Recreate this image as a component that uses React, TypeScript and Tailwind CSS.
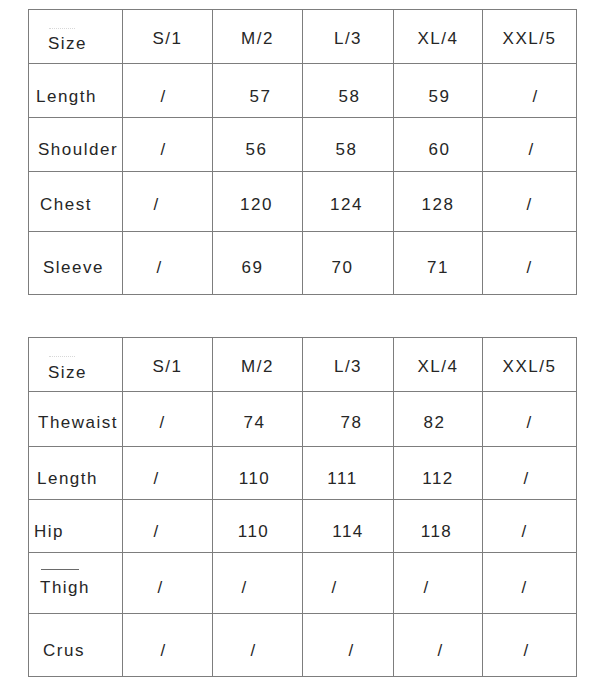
import React from "react";

type Row = {
  label: string;
  labelPad: string;
  height: string;
  pad: string;
  labelPadTop?: string;
  mark?: "dots" | "line";
  cells: [string, string][];
};

const header = ["S/1", "M/2", "L/3", "XL/4", "XXL/5"];

const topTable: Row[] = [
  {
    label: "Size",
    labelPad: "pl-[19px]",
    labelPadTop: "pt-[24px]",
    height: "h-[54px]",
    pad: "pt-[19px]",
    mark: "dots",
    cells: header.map((h) => [h, ""]) as [string, string][],
  },
  {
    label: "Length",
    labelPad: "pl-[7px]",
    height: "h-[54px]",
    pad: "pt-[23px]",
    cells: [
      ["/", "pr-[8px]"],
      ["57", "pl-[6px]"],
      ["58", "pl-[3px]"],
      ["59", "pl-[3px]"],
      ["/", "pl-[12px]"],
    ],
  },
  {
    label: "Shoulder",
    labelPad: "pl-[9px]",
    height: "h-[54px]",
    pad: "pt-[22px]",
    cells: [
      ["/", "pr-[8px]"],
      ["56", "pr-[2px]"],
      ["58", "pr-[3px]"],
      ["60", "pl-[3px]"],
      ["/", "pl-[4px]"],
    ],
  },
  {
    label: "Chest",
    labelPad: "pl-[11px]",
    height: "h-[60px]",
    pad: "pt-[23px]",
    cells: [
      ["/", "pr-[22px]"],
      ["120", "pr-[2px]"],
      ["124", "pr-[3px]"],
      ["128", ""],
      ["/", ""],
    ],
  },
  {
    label: "Sleeve",
    labelPad: "pl-[14px]",
    height: "h-[63px]",
    pad: "pt-[26px]",
    cells: [
      ["/", "pr-[16px]"],
      ["69", "pr-[10px]"],
      ["70", "pr-[11px]"],
      ["71", ""],
      ["/", ""],
    ],
  },
];

const bottomTable: Row[] = [
  {
    label: "Size",
    labelPad: "pl-[19px]",
    labelPadTop: "pt-[25px]",
    height: "h-[54px]",
    pad: "pt-[19px]",
    mark: "dots",
    cells: header.map((h) => [h, ""]) as [string, string][],
  },
  {
    label: "Thewaist",
    labelPad: "pl-[9px]",
    height: "h-[55px]",
    pad: "pt-[21px]",
    cells: [
      ["/", "pr-[10px]"],
      ["74", "pr-[6px]"],
      ["78", "pl-[7px]"],
      ["82", "pr-[7px]"],
      ["/", ""],
    ],
  },
  {
    label: "Length",
    labelPad: "pl-[8px]",
    height: "h-[53px]",
    pad: "pt-[22px]",
    cells: [
      ["/", "pr-[22px]"],
      ["110", "pr-[6px]"],
      ["111", "pr-[11px]"],
      ["112", ""],
      ["/", "pr-[6px]"],
    ],
  },
  {
    label: "Hip",
    labelPad: "pl-[5px]",
    height: "h-[53px]",
    pad: "pt-[22px]",
    cells: [
      ["/", "pr-[22px]"],
      ["110", "pr-[8px]"],
      ["114", ""],
      ["118", "pr-[3px]"],
      ["/", "pr-[10px]"],
    ],
  },
  {
    label: "Thigh",
    labelPad: "pl-[11px]",
    height: "h-[61px]",
    pad: "pt-[25px]",
    mark: "line",
    cells: [
      ["/", "pr-[14px]"],
      ["/", "pr-[26px]"],
      ["/", "pr-[27px]"],
      ["/", "pr-[23px]"],
      ["/", "pr-[10px]"],
    ],
  },
  {
    label: "Crus",
    labelPad: "pl-[14px]",
    height: "h-[63px]",
    pad: "pt-[27px]",
    cells: [
      ["/", "pr-[8px]"],
      ["/", "pr-[8px]"],
      ["/", "pl-[7px]"],
      ["/", "pl-[5px]"],
      ["/", "pr-[6px]"],
    ],
  },
];

function SizeTable({ rows, className }: { rows: Row[]; className?: string }) {
  return (
    <div
      className={`grid w-[549px] grid-cols-[94px_90px_90px_91px_89px_94px] border-t border-l border-[#7d7d7d] ${className ?? ""}`}
    >
      {rows.map((row) => (
        <React.Fragment key={row.label + row.height}>
          <div
            className={`relative flex flex-col items-start border-r border-b border-[#7d7d7d] ${row.height} ${row.labelPad} ${row.labelPadTop ?? row.pad}`}
          >
            {row.mark === "dots" && (
              <span className="absolute left-[20px] top-[18px] h-0 w-[26px] border-t border-dotted border-[#d8d8d8]" />
            )}
            {row.mark === "line" && (
              <span className="absolute left-[12px] top-[16px] h-px w-[38px] bg-[#6a6a6a]" />
            )}
            <span>{row.label}</span>
          </div>
          {row.cells.map(([text, offset], i) => (
            <div
              key={i}
              className={`flex justify-center border-r border-b border-[#7d7d7d] ${row.height} ${row.pad} ${offset}`}
            >
              <span>{text}</span>
            </div>
          ))}
        </React.Fragment>
      ))}
    </div>
  );
}

export default function App() {
  return (
    <div className="h-[685px] w-[600px] bg-white pl-[28px] pt-[9px] font-['Liberation_Sans',Arial,sans-serif] text-[17px] leading-[20px] tracking-[1.5px] text-[#262626]">
      <SizeTable rows={topTable} />
      <SizeTable rows={bottomTable} className="mt-[42px]" />
    </div>
  );
}
